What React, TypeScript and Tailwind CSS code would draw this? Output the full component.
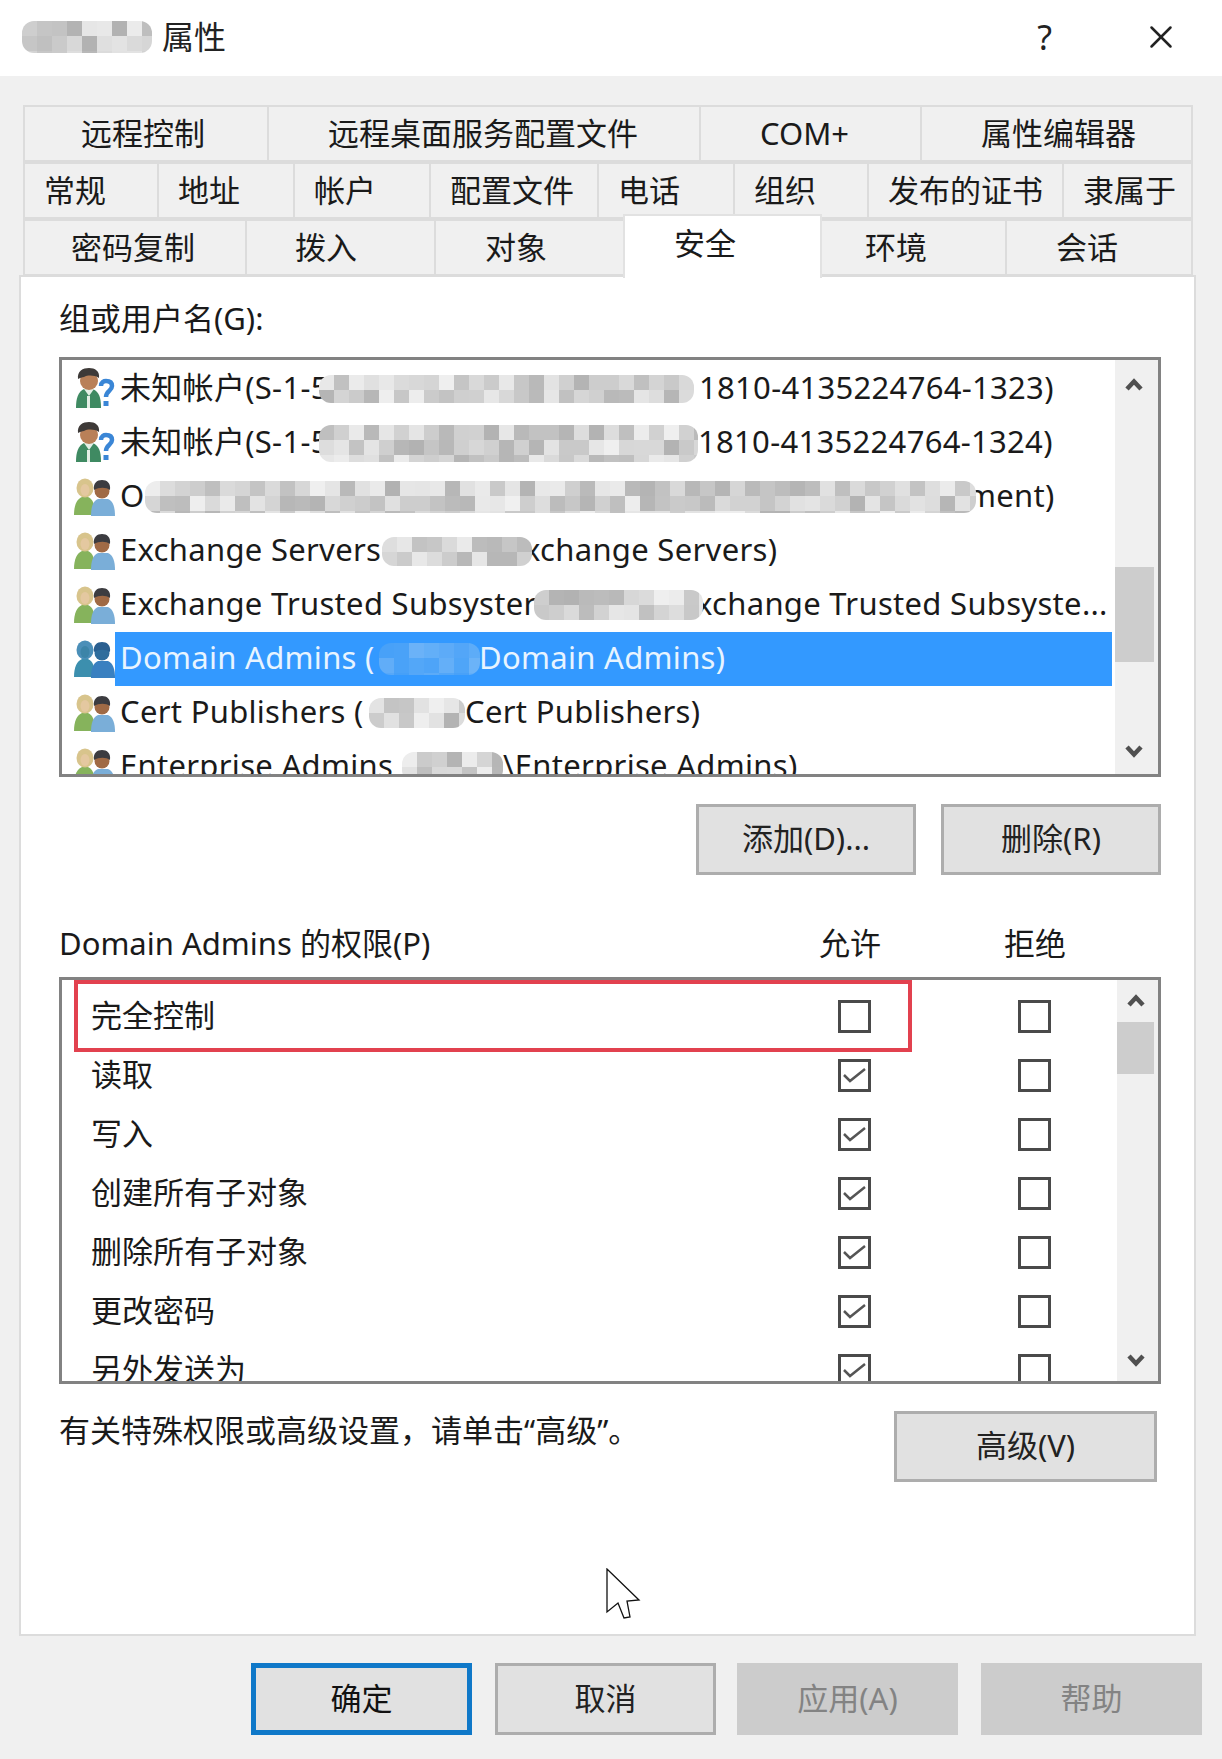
import { X } from 'lucide-react'

const FONT = "font-['Noto_Sans','Noto_Sans_CJK_SC',sans-serif]"

const tabRows = [
  [
    { label: '远程控制', w: 'w-[246px] pl-[56px]' },
    { label: '远程桌面服务配置文件', w: 'w-[434px] pl-[59px]' },
    { label: 'COM+', w: 'w-[223px] pl-[59px]' },
    { label: '属性编辑器', w: 'w-[273px] pl-[59px]' },
  ],
  [
    { label: '常规', w: 'w-[136px] pl-[19px]' },
    { label: '地址', w: 'w-[138px] pl-[19px]' },
    { label: '帐户', w: 'w-[138px] pl-[19px]' },
    { label: '配置文件', w: 'w-[170px] pl-[19px]' },
    { label: '电话', w: 'w-[138px] pl-[19px]' },
    { label: '组织', w: 'w-[136px] pl-[19px]' },
    { label: '发布的证书', w: 'w-[197px] pl-[19px]' },
    { label: '隶属于', w: 'w-[131px] pl-[19px]' },
  ],
  [
    { label: '密码复制', w: 'w-[224px] pl-[46px]' },
    { label: '拨入', w: 'w-[191px] pl-[48px]' },
    { label: '对象', w: 'w-[191px] pl-[49px]' },
    { label: '安全', w: 'w-[199px] pl-[49px]', active: true },
    { label: '环境', w: 'w-[187px] pl-[43px]' },
    { label: '会话', w: 'w-[188px] pl-[49px]' },
  ],
]

const members = [
  { icon: 'user', before: '未知帐户(S-1-5', pre: 'w-[199px]', mw: 375, mh: 28, seed: 3, after: '1810-4135224764-1323)', gap: 'ml-[5px]' },
  { icon: 'user', before: '未知帐户(S-1-5', pre: 'w-[199px]', mw: 379, mh: 37, seed: 11, after: '1810-4135224764-1324)', gap: 'ml-0' },
  { icon: 'group', before: 'O', pre: 'w-[25px]', mw: 831, mh: 32, seed: 17, after: 'ment)', gap: '-ml-[9px]' },
  { icon: 'group', before: 'Exchange Servers', pre: 'w-[262px]', mw: 150, mh: 29, seed: 23, after: 'xchange Servers)', gap: '-ml-[8px]' },
  { icon: 'group', before: 'Exchange Trusted Subsyster', pre: 'w-[414px]', mw: 169, mh: 30, seed: 29, after: 'xchange Trusted Subsyste...', gap: '-ml-[7px]' },
  { icon: 'group', before: 'Domain Admins (', pre: 'w-[259px]', mw: 101, mh: 32, seed: 31, after: 'Domain Admins)', gap: '-ml-[1px]', selected: true },
  { icon: 'group', before: 'Cert Publishers (', pre: 'w-[249px]', mw: 96, mh: 30, seed: 37, after: 'Cert Publishers)', gap: 'ml-0' },
  { icon: 'group', before: 'Enterprise Admins', pre: 'w-[282px]', mw: 101, mh: 30, seed: 41, after: '\\Enterprise Admins)', gap: 'ml-0' },
]

const permissions = [
  { label: '完全控制', allow: false },
  { label: '读取', allow: true },
  { label: '写入', allow: true },
  { label: '创建所有子对象', allow: true },
  { label: '删除所有子对象', allow: true },
  { label: '更改密码', allow: true },
  { label: '另外发送为', allow: true },
]

// pixelated blur over the redacted names
function Mosaic({ w, h, seed, blue }: { w: number; h: number; seed: number; blue?: boolean }) {
  const cell = 15
  const cols = Math.ceil(w / cell)
  const rows = Math.ceil(h / cell)
  let s = seed * 7919
  const next = () => {
    s = (s * 1103515245 + 12345) % 2147483648
    return s / 2147483648
  }
  const rects = []
  for (let y = 0; y < rows; y++) {
    for (let x = 0; x < cols; x++) {
      const v = next()
      const g = Math.round(178 + v * 62)
      const fill = blue
        ? `rgb(${70 + Math.round(v * 40)},${160 + Math.round(v * 20)},${248})`
        : `rgb(${g},${g},${g})`
      rects.push(<rect key={`${x}-${y}`} x={x * cell} y={y * cell} width={cell} height={cell} fill={fill} />)
    }
  }
  return (
    <svg width={w} height={h} className="relative z-10 shrink-0 rounded-xl">
      {rects}
    </svg>
  )
}

function UserIcon() {
  return (
    <svg width="42" height="44" viewBox="0 0 42 44" className="shrink-0 blur-[0.5px]">
      <path d="M2 41c0-10 2-16 8-19h9c6 3 8 8 8 19z" fill="#3f8a62" />
      <path d="M10 22l5 7 5-7z" fill="#e4efe6" />
      <path d="M13 29h3v12h-3z" fill="#e4efe6" />
      <circle cx="15" cy="14" r="9" fill="#b98058" />
      <path d="M4 12C3 4 9 1 15 1s11 3 10 10c-5-3-11-3-15-1-2 0-4 1-6 2z" fill="#3e3a38" />
      <path d="M27 19c0-4 3-5 5-5 4 0 6 2 6 5 0 5-6 5-6 11" fill="none" stroke="#3a86d6" strokeWidth="4.5" />
      <rect x="29.5" y="34" width="5" height="5" fill="#3a86d6" />
    </svg>
  )
}

function GroupIcon({ selected }: { selected?: boolean }) {
  return (
    <svg width="42" height="38" viewBox="0 0 42 38" className="shrink-0 blur-[0.5px]">
      <path d="M0 37c0-10 3-16 8-18h6c5 2 7 8 7 18z" fill={selected ? '#3c8fae' : '#86b35c'} />
      <ellipse cx="11" cy="10" rx="8.5" ry="9.5" fill={selected ? '#4b8fb8' : '#d8c48c'} />
      <ellipse cx="11" cy="12" rx="4.5" ry="6" fill={selected ? '#3c84a8' : '#e4c8a0'} />
      <path d="M17 38c0-9 2-15 7-17h10c5 2 7 8 7 17z" fill={selected ? '#3a80c0' : '#7aaed8'} />
      <circle cx="28" cy="13" r="7.5" fill={selected ? '#2f6d9c' : '#a06a45'} />
      <path d="M20 12c-1-7 3-10 8-10s9 3 8 10c-4-3-11-3-16 0z" fill={selected ? '#2a5f90' : '#3c3c40'} />
    </svg>
  )
}

function ScrollArrow({ up }: { up?: boolean }) {
  return (
    <svg width="20" height="14" viewBox="0 0 20 14" className="text-[#505050]">
      <path d={up ? 'M3 12 L10 4.5 L17 12' : 'M3 2 L10 9.5 L17 2'} fill="none" stroke="currentColor" strokeWidth="4.5" />
    </svg>
  )
}

function Checkbox({ checked }: { checked?: boolean }) {
  return (
    <div className="w-[33px] h-[33px] shrink-0 border-[3px] border-[#4a4a4a] bg-white flex items-center justify-center">
      {checked && (
        <svg width="27" height="27" viewBox="0 0 27 27">
          <path d="M3 13 L9 19 L24 7" fill="none" stroke="#555" strokeWidth="2.5" />
        </svg>
      )}
    </div>
  )
}

function PushButton({ children, className }: { children: React.ReactNode; className: string }) {
  return (
    <div className={`flex items-center justify-center pb-[2px] bg-[#e1e1e1] border-[3px] border-[#adadad] text-[#222] ${className}`}>
      {children}
    </div>
  )
}

export default function App() {
  return (
    <div className={`relative w-[1222px] h-[1759px] bg-[#f0f0f0] overflow-hidden text-[31px] text-[#1a1a1a] ${FONT}`}>
      {/* Title bar */}
      <div className="h-[76px] bg-white flex items-center pl-[22px] pr-[42px] pb-[2px]">
        <Mosaic w={130} h={32} seed={5} />
        <span className="ml-[10px] text-[32px] leading-none text-[#222]">属性</span>
        <span className="ml-auto text-[34px] leading-none text-[#222]">?</span>
        <X className="ml-[90px] w-[38px] h-[38px] text-[#222]" strokeWidth={1.6} />
      </div>

      {/* Tabs */}
      <div className="pt-[29px] pl-[23px] flex flex-col">
        {tabRows.map((row, i) => (
          <div key={i} className="flex h-[57px]">
            {row.map((tab) => (
              <div
                key={tab.label}
                className={`${tab.w} flex items-center border-2 -mr-[2px] ${
                  'active' in tab && tab.active
                    ? 'relative z-10 -mt-[5px] h-[64px] pb-[8px] bg-white border-[#e2e2e2] border-b-0'
                    : 'bg-[#f0f0f0] border-[#dcdcdc]'
                }`}
              >
                {tab.label}
              </div>
            ))}
          </div>
        ))}
      </div>

      {/* Security page */}
      <div className="ml-[19px] mr-[26px] h-[1361px] -mt-[1px] bg-white border-2 border-[#dcdcdc] pt-[16px] pl-[38px] pr-[33px]">
        <div className="h-[50px] leading-[50px]">组或用户名(G):</div>

        <div className="mt-[14px] h-[420px] flex border-[3px] border-[#828282] bg-white overflow-hidden">
          <div className="flex-1 min-w-0 pt-[2px] pr-[3px] overflow-hidden">
            {members.map((m, i) => (
              <div key={i} className="h-[54px] flex items-center pl-[12px]">
                <div className="w-[41px] flex shrink-0 items-center">
                  {m.icon === 'user' ? <UserIcon /> : <GroupIcon selected={m.selected} />}
                </div>
                <div
                  className={`flex-1 h-full flex items-center whitespace-nowrap overflow-hidden pl-[5px] tracking-[0.3px] ${
                    m.selected ? 'bg-[#3399ff] text-[#e8f4ff]' : ''
                  }`}
                >
                  <span className={`${m.pre} shrink-0 pb-[3px]`}>{m.before}</span>
                  <Mosaic w={m.mw} h={m.mh} seed={m.seed} blue={m.selected} />
                  <span className={`${m.gap} pb-[3px]`}>{m.after}</span>
                </div>
              </div>
            ))}
          </div>
          <div className="w-[43px] shrink-0 bg-[#f0f0f0] flex flex-col items-center justify-between pt-[9px] pb-[7px] pr-[5px] relative">
            <div className="h-[30px] flex items-center"><ScrollArrow up /></div>
            <div className="absolute left-0 w-[39px] top-[207px] h-[95px] bg-[#cdcdcd]" />
            <div className="h-[30px] flex items-center"><ScrollArrow /></div>
          </div>
        </div>

        <div className="mt-[27px] flex justify-end gap-[25px]">
          <PushButton className="w-[220px] h-[71px]">添加(D)...</PushButton>
          <PushButton className="w-[220px] h-[71px]">删除(R)</PushButton>
        </div>

        <div className="mt-[44px] h-[50px] pb-[2px] flex items-center">
          <span className="w-[741px]">Domain Admins 的权限(P)</span>
          <span className="w-[100px] text-center">允许</span>
          <span className="ml-[85px] w-[100px] text-center">拒绝</span>
        </div>

        <div className="mt-[8px] h-[407px] flex border-[3px] border-[#828282] bg-white overflow-hidden">
          <div className="relative flex-1 min-w-0 pt-[7px] overflow-hidden">
            {permissions.map((p) => (
              <div key={p.label} className="h-[59px] flex items-center shrink-0">
                <span className="w-[776px] pl-[29px] pb-[2px]">{p.label}</span>
                <Checkbox checked={p.allow} />
                <div className="w-[147px]" />
                <Checkbox />
              </div>
            ))}
            <div className="absolute left-[12px] top-0 w-[838px] h-[72px] border-[4px] border-[#e2414f]" />
          </div>
          <div className="w-[41px] shrink-0 bg-[#f0f0f0] flex flex-col items-center justify-between pr-[3px] relative">
            <div className="h-[40px] flex items-center"><ScrollArrow up /></div>
            <div className="absolute left-0 w-[37px] top-[42px] h-[52px] bg-[#cdcdcd]" />
            <div className="h-[40px] flex items-center"><ScrollArrow /></div>
          </div>
        </div>

        <div className="mt-[27px] pr-[4px] flex items-start justify-between">
          <span className="leading-[38px]">有关特殊权限或高级设置，请单击“高级”。</span>
          <PushButton className="w-[263px] h-[71px]">高级(V)</PushButton>
        </div>
      </div>

      {/* Dialog buttons */}
      <div className="mt-[27px] pl-[251px] flex">
        <div className="w-[221px] h-[72px] pb-[2px] flex items-center justify-center bg-[#e1e1e1] border-[5px] border-[#0f78c8] text-[#111]">确定</div>
        <PushButton className="ml-[23px] w-[221px] h-[72px] text-[#111]">取消</PushButton>
        <div className="ml-[21px] w-[221px] h-[72px] pb-[2px] flex items-center justify-center bg-[#cccccc] text-[#838383]">应用(A)</div>
        <div className="ml-[23px] w-[221px] h-[72px] pb-[2px] flex items-center justify-center bg-[#cccccc] text-[#838383]">帮助</div>
      </div>

      {/* Mouse pointer */}
      <svg width="36" height="52" viewBox="0 0 36 52" className="absolute left-[605px] top-[1568px]">
        <path d="M2 1 L2 44 L13 35 L19 50 L25 49 L22 33 L34 32 Z" fill="#fff" stroke="#111" strokeWidth="1.3" />
      </svg>
    </div>
  )
}
